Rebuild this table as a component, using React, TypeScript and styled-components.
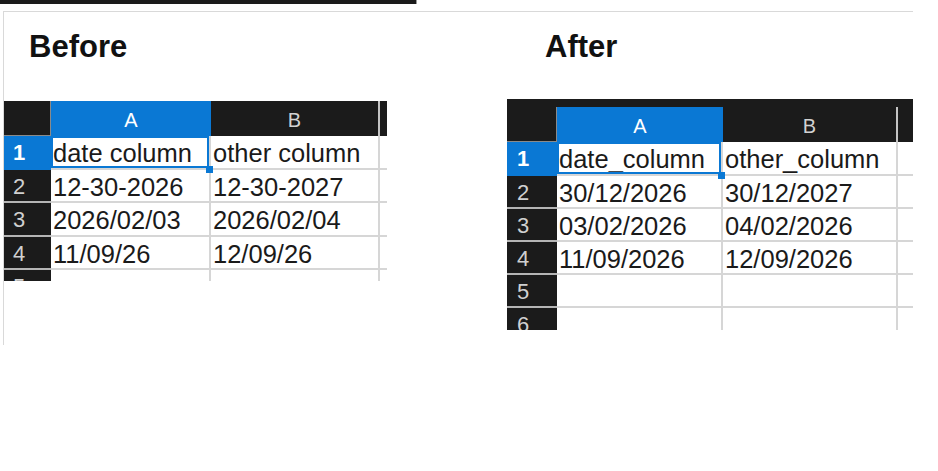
import React from "react";
import styled, { createGlobalStyle } from "styled-components";

const BLUE = "#0a78d4";
const DARK = "#1b1b1b";
const GRID = "#d6d6d6";

const GlobalStyle = createGlobalStyle`
  body {
    margin: 0;
    background: #ffffff;
    font-family: "Liberation Sans", Arial, sans-serif;
  }
`;

const Page = styled.div`
  width: 938px;
  height: 471px;
  overflow: hidden;
`;

const TopBar = styled.div`
  width: 417px;
  height: 4px;
  box-sizing: border-box;
  background: ${DARK};
  border-right: 1px solid #9a9a9a;
`;

const Frame = styled.div`
  margin: 7px 0 0 3px;
  width: 910px;
  height: 334px;
  box-sizing: border-box;
  border-top: 1px solid #d9d9d9;
  border-left: 1px solid #d9d9d9;
  display: flex;
`;

const Panel = styled.section<{ $width?: number }>`
  display: flex;
  flex-direction: column;
  flex: ${(p) => (p.$width ? `0 0 ${p.$width}px` : "1 1 auto")};
`;

const Title = styled.h2<{ $indent: number }>`
  margin: 19px 0 0 ${(p) => p.$indent}px;
  font-size: 31px;
  line-height: 31px;
  font-weight: bold;
  color: #111111;
`;

const Sheet = styled.div<{ $cols: string; $rows: string; $height: number; $top: number }>`
  margin-top: ${(p) => p.$top}px;
  display: grid;
  grid-template-columns: ${(p) => p.$cols};
  grid-template-rows: ${(p) => p.$rows};
  height: ${(p) => p.$height}px;
  width: max-content;
  overflow: hidden;
  background: #ffffff;
`;

const Strip = styled.div`
  grid-column: 1 / -1;
  background: ${DARK};
`;

const Corner = styled.div`
  background: ${DARK};
  border-right: 1px solid #8a8a8a;
  border-bottom: 1px solid #8a8a8a;
`;

const ColHead = styled.div<{ $active?: boolean; $divider?: boolean }>`
  display: flex;
  align-items: center;
  justify-content: center;
  padding-top: 3px;
  background: ${(p) => (p.$active ? BLUE : DARK)};
  color: ${(p) => (p.$active ? "#ffffff" : "#d2d2d2")};
  font-size: 20px;
  border-right: ${(p) => (p.$divider ? "2px solid #c4c4c4" : "none")};
`;

const HeadEnd = styled.div`
  background: ${DARK};
`;

const RowHead = styled.div<{ $active?: boolean; $pad: number }>`
  display: flex;
  align-items: center;
  padding-left: ${(p) => p.$pad}px;
  padding-top: 2px;
  background: ${(p) => (p.$active ? BLUE : DARK)};
  color: ${(p) => (p.$active ? "#ffffff" : "#d0d0d0")};
  font-size: 22px;
  font-weight: ${(p) => (p.$active ? "bold" : "normal")};
  border-bottom: 2px solid ${(p) => (p.$active ? BLUE : "#b5b5b5")};
`;

const Cell = styled.div<{ $selected?: boolean }>`
  position: ${(p) => (p.$selected ? "relative" : "static")};
  display: flex;
  align-items: center;
  padding: 3px 0 0 2px;
  font-size: 25.5px;
  color: #1a1a1a;
  white-space: nowrap;
  border-right: 2px solid ${GRID};
  border-bottom: 2px solid ${GRID};

  ${(p) =>
    p.$selected &&
    `
    &::after {
      content: "";
      position: absolute;
      inset: 0;
      border: 2px solid ${BLUE};
    }
    &::before {
      content: "";
      position: absolute;
      right: -4px;
      bottom: -5px;
      width: 7px;
      height: 7px;
      background: ${BLUE};
      z-index: 2;
    }
  `}
`;

const EdgeCell = styled.div`
  border-bottom: 2px solid ${GRID};
`;

interface SheetConfig {
  cols: string;
  rows: string;
  height: number;
  top: number;
  rowPad: number;
  strip?: boolean;
  data: string[][];
}

const beforeSheet: SheetConfig = {
  cols: "47px 160px 169px 7px",
  rows: "35px 34px 33px 34px 33px 33px",
  height: 180,
  top: 39,
  rowPad: 9,
  data: [
    ["date column", "other column"],
    ["12-30-2026", "12-30-2027"],
    ["2026/02/03", "2026/02/04"],
    ["11/09/26", "12/09/26"],
    ["", ""],
  ],
};

const afterSheet: SheetConfig = {
  cols: "50px 166px 175px 15px",
  rows: "8px 35px 34px 33px 33px 33px 33px 33px",
  height: 231,
  top: 37,
  rowPad: 10,
  strip: true,
  data: [
    ["date_column", "other_column"],
    ["30/12/2026", "30/12/2027"],
    ["03/02/2026", "04/02/2026"],
    ["11/09/2026", "12/09/2026"],
    ["", ""],
    ["", ""],
  ],
};

const Spreadsheet = ({ config }: { config: SheetConfig }) => (
  <Sheet $cols={config.cols} $rows={config.rows} $height={config.height} $top={config.top}>
    {config.strip && <Strip />}
    <Corner />
    <ColHead $active>A</ColHead>
    <ColHead $divider>B</ColHead>
    <HeadEnd />
    {config.data.map((row, i) => (
      <React.Fragment key={i}>
        <RowHead $active={i === 0} $pad={config.rowPad}>
          {i + 1}
        </RowHead>
        <Cell $selected={i === 0}>{row[0]}</Cell>
        <Cell>{row[1]}</Cell>
        <EdgeCell />
      </React.Fragment>
    ))}
  </Sheet>
);

export default function App() {
  return (
    <Page>
      <GlobalStyle />
      <TopBar />
      <Frame>
        <Panel $width={503}>
          <Title $indent={25}>Before</Title>
          <Spreadsheet config={beforeSheet} />
        </Panel>
        <Panel>
          <Title $indent={38}>After</Title>
          <Spreadsheet config={afterSheet} />
        </Panel>
      </Frame>
    </Page>
  );
}
